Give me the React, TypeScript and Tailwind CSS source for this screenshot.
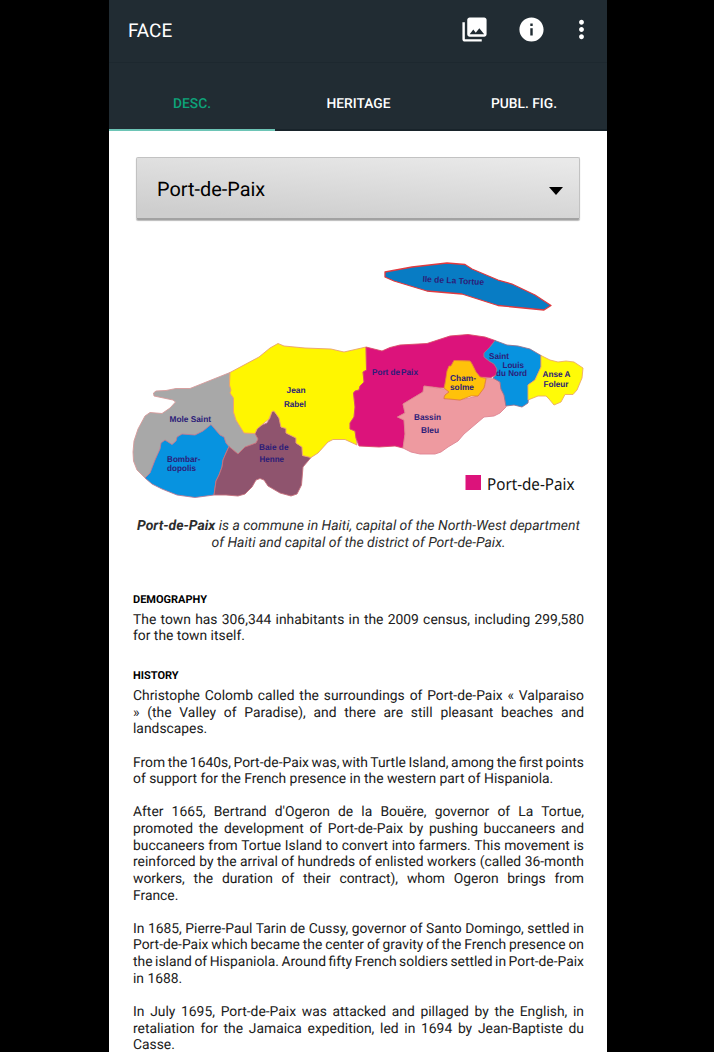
import React from "react";
import { MdCollections, MdInfo, MdMoreVert } from "react-icons/md";

const regions: { name: string; fill: string; stroke: string; points: string }[] = [
  { name: "Mole Saint", fill: "#a8a8a8", stroke: "#d79a9a", points: "230,372.5 190,388.5 176,388.5 166,390.5 156,391 153.5,393 154,396 173,400 175.5,402 170,408 162,413.5 150,412.5 145,416 138,429 134,441 133,452 133.5,461 137,470 145,478 150,473 155,460 160,449 161,443 165,440 172,444.5 176,441 177,437 182,434 195,435 203,431 211,424.5 220,435 224,437 226,443 229,446.5 238,454 245,447 252,444.5 256,443 258,439 255,433.5 246,433 244,433 236,420 233.5,412 233.5,398 230,393 231,390 229.5,385" },
  { name: "Bombardopolis", fill: "#0793e0", stroke: "#b87b95", points: "145,478 150,473 155,460 160,449 161,443 165,440 172,444.5 176,441 177,437 182,434 195,435 203,431 211,424.5 220,435 224,437 226,443 229,446.5 226,453 223,460 222,467 219,475 216,481 214,495 195,497.5 177,495 162,489 152,484" },
  { name: "Baie de Henne", fill: "#8f546e", stroke: "#c5707d", points: "229,446.5 238,454 245,447 252,444.5 256,443 258,439 255,433.5 257,429 261,425.5 267,423 270,418 272,411.5 274,411 279,418 281,427 286,428.5 286,433 296,438 296,443 302,447 302.5,455.5 311,457.5 303,467 301.5,485 297,494 291,496 280,493 268,486 264,480 260,478.5 256,480 252,487 245,494 238,496 226,495 214,495 216,481 219,475 222,467 223,460 226,453" },
  { name: "Jean Rabel", fill: "#fff600", stroke: "#e9a06f", points: "230,372.5 259,357 270,348 278,343.5 284,346 305,348 331,349 344,352 366,347 366.5,370 363,372 364,382 360,386 359,390 355,391 353.5,393 355,407 354,417 350,423 350,429 355,431 357,445 345,439.5 333,439.5 328,442 318,453 311,457.5 302.5,455.5 302,447 296,443 296,438 286,433 286,428.5 281,427 279,418 274,411 272,411.5 269,419 261,425.5 257,429 255,433.5 244,433 236,420 233.5,412 233.5,398 230,393 231,390 229.5,385" },
  { name: "Port de Paix", fill: "#dc137b", stroke: "#da4968", points: "366,347 382,351 390,347.5 400,345 427,343.5 450,336 468,334.5 485,337 495,340.5 490,347 484,353 484,357 489,361 494,364 497,369 496,375 491,377.5 480,377 476,372 472,364 470,361 454,360.5 451,366 448,371 445,384 444,388 424,386 423,392 403,404 405,413 397.5,417 404,420 405,434 403,448 395,446 379,447 359,446 356,438 355,431 350,429 350,423 354,417 355,407 353.5,393 355,391 359,390 360,386 364,382 363,372 366.5,370" },
  { name: "Bassin Bleu", fill: "#ee9aa0", stroke: "#df8593", points: "424,386 447,389.5 449,392 444,396 444,399 460,400 478,396 485,386 486,378.5 497,379 500,383 501,389 504,395 506,407 500,413 494,416 484,417 464,434 458,441 448,447 441,452 435,454 420,454 411,452 403,448 405,434 404,420 397.5,417 405,413 403,404 423,392" },
  { name: "Chamsolme", fill: "#ffc20a", stroke: "#e47f38", points: "454,360.5 470,361 472,364 476,372 480,377 486,378.5 484,388 478,396 471,396 460,400 444,398.5 445,395 449,392 444,388 445,384 447,371 449,366 451,366" },
  { name: "Saint Louis du Nord", fill: "#0793e0", stroke: "#96728e", points: "495,340.5 507,345 518,346 530,349 541,355.5 541,367 535,380 528,385 529,393 528,403 522,407 514,405 506,406 504,395 501,389 500,382 493,378 496,375 497,369 494,364 489,361 484,357 484,353 490,347" },
  { name: "Anse A Foleur", fill: "#fffb07", stroke: "#ecac65", points: "541,355.5 550,360 558,362 566,361 574,362 583,368 582,378 577,390 573,394.5 565,394.5 561,402 554,405 549,399 546,396 538,396 528,400 528,385 535,380 541,367" },
  { name: "Ile de La Tortue", fill: "#087cc4", stroke: "#e03a3f", points: "385,272 412,267 447,263 465,264.5 472,269 498,280 512,284 535,295 551,305.5 544,310 498,305.5 462,294 427,291 394,281 385,277" },
];

const labels: [string, number, number, number][] = [
  ["Mole Saint", 169.5, 422.3, 41.5],
  ["Bombar-", 167, 461.8, 33.5],
  ["dopolis", 167, 471, 29],
  ["Baie de", 259, 450, 29.5],
  ["Henne", 259.5, 461.5, 24.5],
  ["Jean", 286.5, 392.7, 19],
  ["Rabel", 284, 407, 22],
  ["Port de", 372, 374.7, 28],
  ["Paix", 401, 374.7, 17],
  ["Cham-", 450, 380.5, 26],
  ["solme", 450, 389.8, 24],
  ["Bassin", 414, 419.5, 27],
  ["Bleu", 421, 433.3, 18],
  ["Saint", 489, 358.5, 20],
  ["Louis", 502.5, 367.7, 21.5],
  ["du Nord", 496, 376, 31],
  ["Anse A", 542.5, 377.3, 28],
  ["Foleur", 543.5, 386.5, 25],
];

function RegionMap() {
  return (
    <svg viewBox="125 250 474 260" className="block h-[260px] w-[474px]">
      {regions.map((r) => (
        <polygon key={r.name} points={r.points} fill={r.fill} stroke={r.stroke} strokeWidth={r.name === "Ile de La Tortue" ? 1.3 : 0.9} strokeLinejoin="round" />
      ))}
      <g fill="#2c1c78" fontFamily="Liberation Sans, sans-serif" fontWeight="700" fontSize="8.5" textRendering="geometricPrecision">
        {labels.map(([text, x, y, width]) => (
          <text key={text} x={x} y={y} textLength={width} lengthAdjust="spacingAndGlyphs">{text}</text>
        ))}
        <text x="422.5" y="281.8" textLength="61.5" lengthAdjust="spacingAndGlyphs" transform="rotate(3 422 281)">Ile de La Tortue</text>
      </g>
      <rect x="465.5" y="475" width="15.5" height="15" fill="#dc137b" />
      <text x="487" y="489.5" fontFamily="Noto Sans, sans-serif" fontSize="16.5" fill="#111" textLength="87.5" lengthAdjust="spacingAndGlyphs" textRendering="geometricPrecision">Port-de-Paix</text>
    </svg>
  );
}

function Paragraph({ lines }: { lines: string[] }) {
  return (
    <p className="mb-[16.63px]">
      {lines.map((line, i) => (
        <span
          key={line}
          className={
            i < lines.length - 1
              ? "block whitespace-nowrap text-justify [text-align-last:justify] [word-spacing:-1.3px]"
              : "block whitespace-nowrap"
          }
        >
          {line}
        </span>
      ))}
    </p>
  );
}

const history = [
  ["Christophe Colomb called the surroundings of Port-de-Paix « Valparaiso", "» (the Valley of Paradise), and there are still pleasant beaches and", "landscapes."],
  ["From the 1640s, Port-de-Paix was, with Turtle Island, among the first points", "of support for the French presence in the western part of Hispaniola."],
  ["After 1665, Bertrand d'Ogeron de la Bouëre, governor of La Tortue,", "promoted the development of Port-de-Paix by pushing buccaneers and", "buccaneers from Tortue Island to convert into farmers. This movement is", "reinforced by the arrival of hundreds of enlisted workers (called 36-month", "workers, the duration of their contract), whom Ogeron brings from", "France."],
  ["In 1685, Pierre-Paul Tarin de Cussy, governor of Santo Domingo, settled in", "Port-de-Paix which became the center of gravity of the French presence on", "the island of Hispaniola. Around fifty French soldiers settled in Port-de-Paix", "in 1688."],
  ["In July 1695, Port-de-Paix was attacked and pillaged by the English, in", "retaliation for the Jamaica expedition, led in 1694 by Jean-Baptiste du", "Casse."],
];

export default function App() {
  return (
    <div className="flex h-[1052px] justify-center overflow-hidden bg-black pl-[2px] font-['Roboto',sans-serif] [text-rendering:geometricPrecision]">
      <div className="flex h-full w-[498px] flex-col overflow-hidden bg-white">
        <header className="flex h-[131px] shrink-0 flex-col bg-[#212c33] text-white">
          <div className="flex h-[63px] shrink-0 items-center border-b border-[#1d282f] pl-[19px] pr-[11px]">
            <h1 className="mt-px flex-1 text-[18.9px] leading-none">FACE</h1>
            <div className="-mt-[4px] flex items-center">
              <MdCollections className="mr-[28px] size-[29px]" />
              <MdInfo className="mr-[21px] size-[29px]" />
              <MdMoreVert className="size-[29px]" />
            </div>
          </div>
          <nav className="grid flex-1 grid-cols-3 text-center text-[13.8px] font-medium">
            <div className="flex items-center justify-center border-b-2 border-[#6dc5b6] pt-[17px] text-[#0da37a]">DESC.</div>
            <div className="flex items-center justify-center border-b-2 border-[#18232a] pl-px pt-[17px]">HERITAGE</div>
            <div className="flex items-center justify-center border-b-2 border-[#18232a] pt-[17px]">PUBL. FIG.</div>
          </nav>
        </header>
        <main className="flex flex-col pt-[26px]">
          <div className="ml-[27px] flex h-[63px] w-[444px] shrink-0 items-center justify-between rounded-[2px] border border-b-2 border-[#c2c2c2] border-b-[#a2a2a2] bg-linear-[184deg] from-[#e9e9e9] from-5% to-[#cecece] to-90% pl-[20px] pr-[16px] shadow-[0_1px_1px_#bbbbbb]">
            <span className="mt-[4px] text-[19.9px] text-black">Port-de-Paix</span>
            <svg viewBox="0 0 14 8" className="mt-[5px] h-[8px] w-[14px]"><path d="M0 0h14L7 8z" /></svg>
          </div>
          <div className="ml-[16px] mt-[30px]">
            <RegionMap />
          </div>
          <div className="mt-[8px] pl-[21px] pr-[20px] text-center text-[13.97px] italic leading-[16.63px] text-[#2d2d2d]">
            <p className="whitespace-nowrap"><b>Port-de-Paix</b> is a commune in Haiti, capital of the North-West department</p>
            <p className="whitespace-nowrap">of Haiti and capital of the district of Port-de-Paix.</p>
          </div>
          <div className="ml-[24px] mt-[41px] w-[451px] text-[13.87px] leading-[16.63px] text-[#202020]">
            <h2 className="mb-[4.5px] text-[11px] font-bold leading-[15px] text-black">DEMOGRAPHY</h2>
            <Paragraph lines={["The town has 306,344 inhabitants in the 2009 census, including 299,580", "for the town itself."]} />
            <h2 className="mb-[5px] mt-[23px] text-[11px] font-bold leading-[15px] text-black">HISTORY</h2>
            {history.map((lines) => (
              <Paragraph key={lines[0]} lines={lines} />
            ))}
          </div>
        </main>
      </div>
    </div>
  );
}
